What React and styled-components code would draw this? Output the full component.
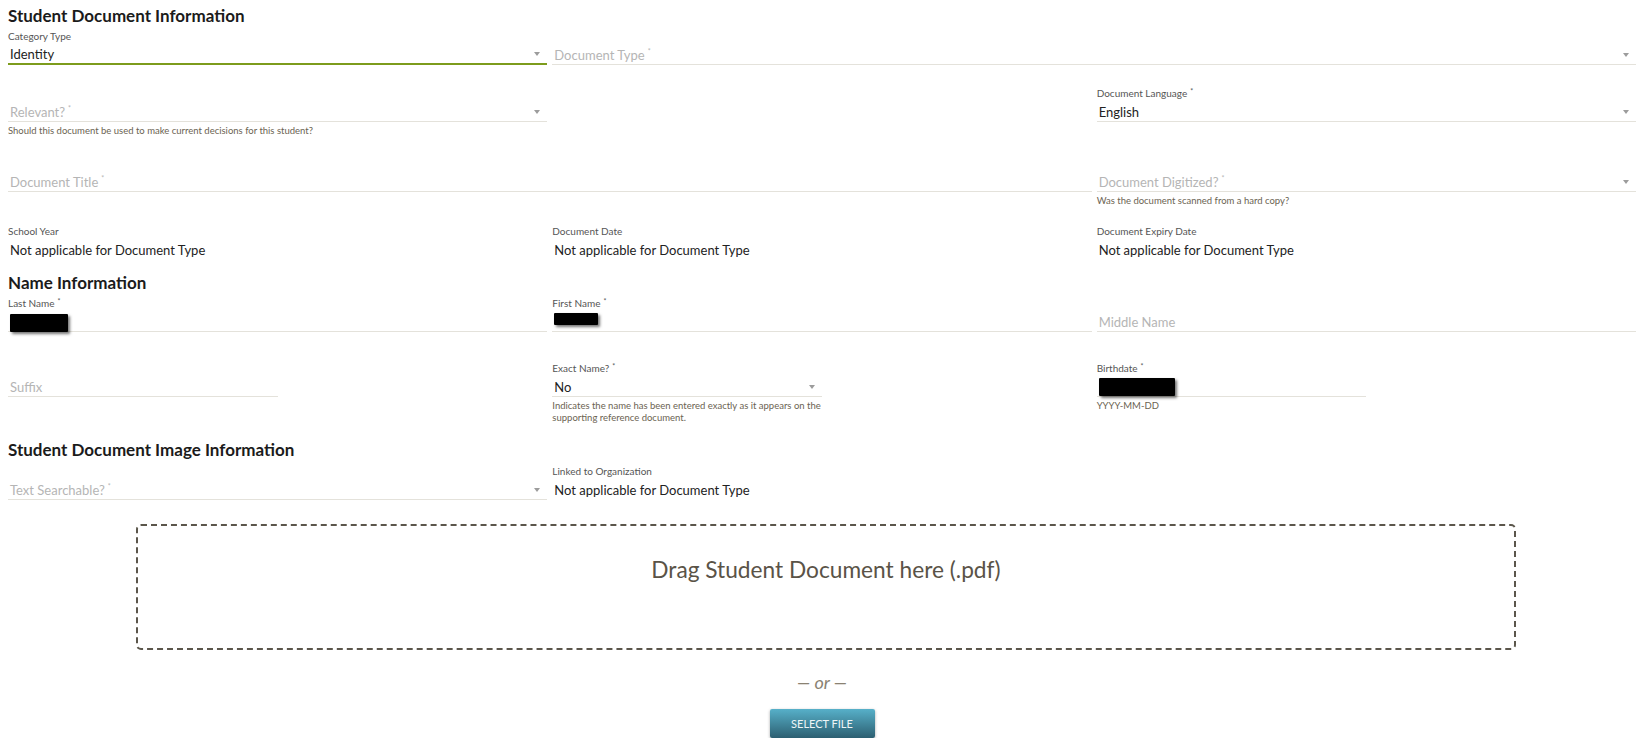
import styled, { createGlobalStyle } from 'styled-components';

const GlobalStyle = createGlobalStyle`
  html, body {
    margin: 0;
    padding: 0;
    background: #fff;
  }

  body {
    font-family: Lato, 'Open Sans', Arial, sans-serif;
    color: #222;
  }
`;

function Required() {
  return <Star>*</Star>;
}

function Field({
  label,
  placeholder,
  value,
  required,
  select,
  active,
  helper,
  span = 1,
  half,
  redacted,
}) {
  const isEmpty = !value && !redacted;

  return (
    <FieldBox $span={span} $half={half}>
      <Label>
        {label}
        {label && required && <Required />}
      </Label>
      <Control $active={active} $empty={isEmpty}>
        <ControlText>
          {redacted && (
            <Redacted $w={redacted.w} $h={redacted.h} $drop={redacted.drop} />
          )}
          {value && <span>{value}</span>}
          {isEmpty && (
            <span>
              {placeholder}
              {required && <Required />}
            </span>
          )}
        </ControlText>
        {select && <Caret />}
      </Control>
      {helper && <Helper>{helper}</Helper>}
    </FieldBox>
  );
}

function ReadOnly({ label, value }) {
  return (
    <FieldBox $span={1}>
      <Label>{label}</Label>
      <StaticValue>{value}</StaticValue>
    </FieldBox>
  );
}

const NA = 'Not applicable for Document Type';

export default function App() {
  return (
    <Page>
      <GlobalStyle />

      <SectionTitle $top={0}>Student Document Information</SectionTitle>

      <FormRow $top={3}>
        <Field label="Category Type" value="Identity" select active />
        <Field span={2} placeholder="Document Type" required select />
      </FormRow>

      <FormRow $top={21}>
        <Field
          placeholder="Relevant?"
          required
          select
          helper="Should this document be used to make current decisions for this student?"
        />
        <div />
        <Field label="Document Language" value="English" required select />
      </FormRow>

      <FormRow $top={19}>
        <Field span={2} placeholder="Document Title" required />
        <Field
          placeholder="Document Digitized?"
          required
          select
          helper="Was the document scanned from a hard copy?"
        />
      </FormRow>

      <FormRow $top={17}>
        <ReadOnly label="School Year" value={NA} />
        <ReadOnly label="Document Date" value={NA} />
        <ReadOnly label="Document Expiry Date" value={NA} />
      </FormRow>

      <SectionTitle $top={14}>Name Information</SectionTitle>

      <FormRow $top={3}>
        <Field label="Last Name" required redacted={{ w: 58, h: 18, drop: -1 }} />
        <Field label="First Name" required redacted={{ w: 44, h: 12, drop: 6 }} />
        <Field placeholder="Middle Name" />
      </FormRow>

      <FormRow $top={29}>
        <Field half placeholder="Suffix" />
        <Field
          half
          label="Exact Name?"
          required
          value="No"
          select
          helper="Indicates the name has been entered exactly as it appears on the supporting reference document."
        />
        <Field
          half
          label="Birthdate"
          required
          redacted={{ w: 76, h: 18, drop: 0 }}
          helper="YYYY-MM-DD"
        />
      </FormRow>

      <SectionTitle $top={16}>Student Document Image Information</SectionTitle>

      <FormRow $top={4}>
        <Field placeholder="Text Searchable?" required select />
        <ReadOnly label="Linked to Organization" value={NA} />
      </FormRow>

      <DropZone>
        <DropText>Drag Student Document here (.pdf)</DropText>
      </DropZone>

      <Divider>— or —</Divider>

      <ButtonRow>
        <SelectButton type="button">Select File</SelectButton>
      </ButtonRow>
    </Page>
  );
}

const Page = styled.div`
  padding: 6px 10px 0 8px;
`;

const SectionTitle = styled.h2`
  margin: ${(p) => p.$top}px 0 0;
  font-size: 17px;
  line-height: 20px;
  font-weight: 700;
  color: #1b1b1b;
`;

const FormRow = styled.div`
  display: grid;
  grid-template-columns: repeat(3, 1fr);
  column-gap: 5px;
  align-items: start;
  margin-top: ${(p) => p.$top}px;
`;

const FieldBox = styled.div`
  grid-column: span ${(p) => p.$span};
  width: ${(p) => (p.$half ? '50%' : 'auto')};
  min-width: 0;
`;

const Label = styled.div`
  height: 14px;
  font-size: 10px;
  line-height: 14px;
  color: #555;
  white-space: nowrap;
`;

const Star = styled.span`
  display: inline-block;
  margin-left: 3px;
  font-size: 7px;
  line-height: 7px;
  vertical-align: top;
  position: relative;
  top: 2px;
`;

const Control = styled.div`
  box-sizing: border-box;
  display: flex;
  align-items: flex-end;
  height: 22px;
  padding: 0 7px 0 2px;
  border-bottom: ${(p) =>
    p.$active ? '2px solid #7d9c1c' : '1px solid #e4e2db'};
  font-size: 13px;
  line-height: 18px;
  color: ${(p) => (p.$empty ? '#b5b5b5' : '#222')};
`;

const ControlText = styled.div`
  flex: 1;
  display: flex;
  align-items: flex-end;
  min-width: 0;
  white-space: nowrap;
`;

const Caret = styled.span`
  width: 0;
  height: 0;
  margin-bottom: 7px;
  border-left: 3px solid transparent;
  border-right: 3px solid transparent;
  border-top: 4px solid #9c9c9c;
`;

const Redacted = styled.span`
  display: block;
  width: ${(p) => p.$w}px;
  height: ${(p) => p.$h}px;
  margin-bottom: ${(p) => p.$drop}px;
  background: #000;
  border-radius: 1px;
  box-shadow: 2px 2px 3px rgba(0, 0, 0, 0.55);
`;

const Helper = styled.div`
  margin-top: 3px;
  font-size: 9.5px;
  line-height: 12px;
  color: #6b6352;
`;

const StaticValue = styled.div`
  margin-top: 3px;
  padding-left: 2px;
  font-size: 13px;
  line-height: 18px;
  color: #222;
  white-space: nowrap;
`;

const DropZone = styled.div`
  box-sizing: border-box;
  height: 126px;
  margin: 24px 120px 0 128px;
  padding-top: 30px;
  border: 2px dashed #5b564b;
  border-radius: 5px;
  text-align: center;
`;

const DropText = styled.div`
  font-size: 22.7px;
  line-height: 28px;
  color: #5a5347;
`;

const Divider = styled.div`
  margin-top: 19px;
  text-align: center;
  font-size: 18px;
  line-height: 26px;
  font-style: italic;
  color: #8a8272;
`;

const ButtonRow = styled.div`
  display: flex;
  justify-content: center;
  margin-top: 14px;
`;

const SelectButton = styled.button`
  width: 105px;
  height: 29px;
  padding: 0;
  border: none;
  border-radius: 2px;
  background: linear-gradient(#57b0c9, #2c5f71);
  box-shadow: 0 1px 3px rgba(0, 0, 0, 0.35);
  color: #eef5f7;
  font-family: Lato, Arial, sans-serif;
  font-size: 11px;
  text-transform: uppercase;
  cursor: pointer;
`;
